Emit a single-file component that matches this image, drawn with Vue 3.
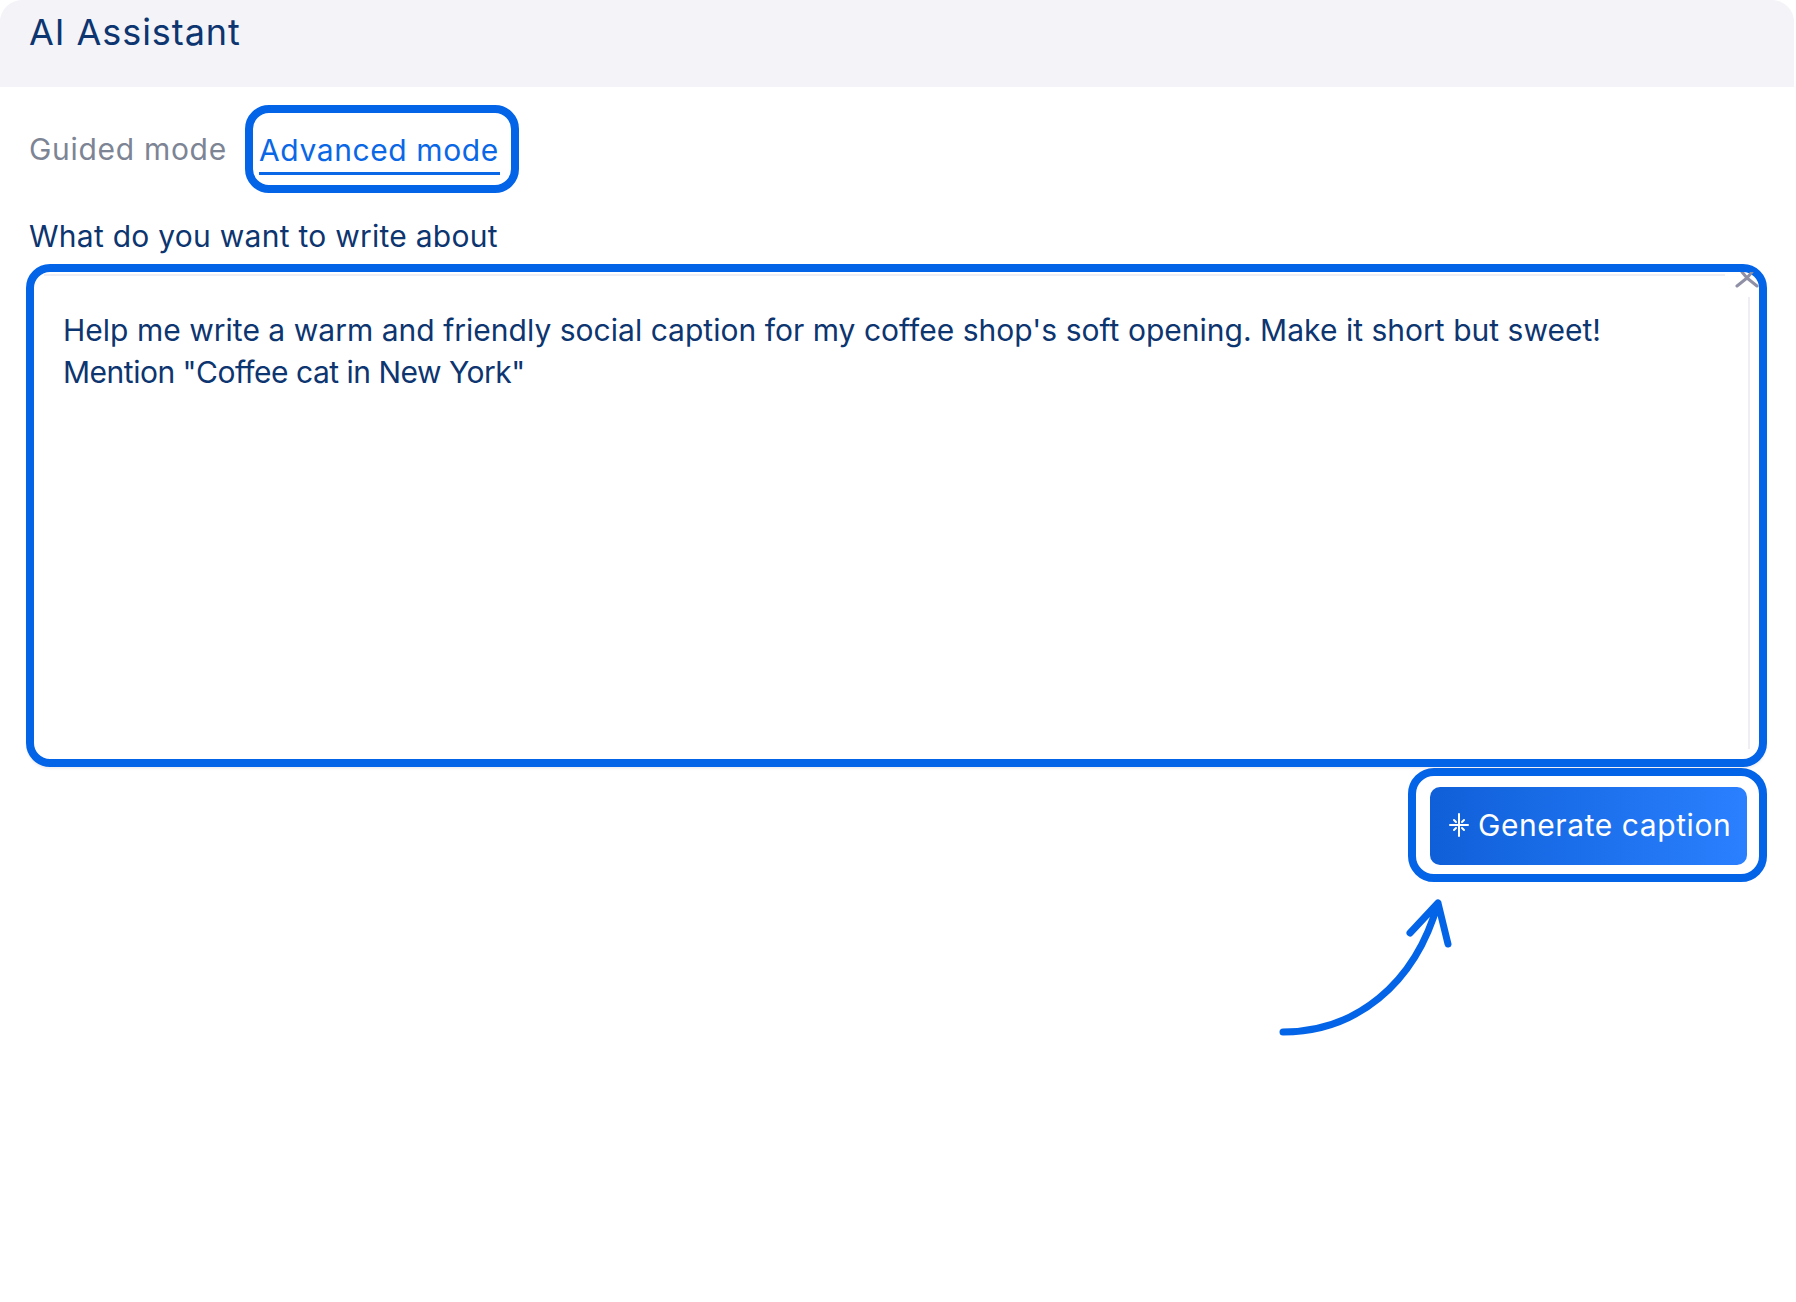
<script setup>
const tabs = [
  { label: 'Guided mode', active: false },
  { label: 'Advanced mode', active: true },
]
</script>

<template>
  <div class="page">
    <header class="head">AI Assistant</header>
    <main class="body">
      <nav class="tabs">
        <div v-for="t in tabs" :key="t.label" class="tab" :class="{ on: t.active }">
          <span class="tab-text">{{ t.label }}</span>
        </div>
      </nav>
      <label class="label">What do you want to write about</label>
      <div class="frame">
        <div class="input">
          <p class="line">Help me write a warm and friendly social caption for my coffee shop's soft opening. Make it short but sweet!</p>
          <p class="line second">Mention "Coffee cat in New York"</p>
        </div>
        <svg class="close" width="24" height="16" viewBox="0 0 24 16">
          <path d="M2 14 L12 6 L22 14 M7 0 L12 6 L17 0" fill="none" stroke="#8f8fa6" stroke-width="3" stroke-linecap="round" stroke-linejoin="round" />
        </svg>
      </div>
      <div class="actions">
        <div class="btn-frame">
          <button class="btn">
            <svg class="spark" width="22" height="24" viewBox="0 0 22 24">
              <path d="M11 1 V23 M2 12 H20 M6 7 L8 9 M16 7 L14 9 M6 17 L8 15 M16 17 L14 15" stroke="#fff" stroke-width="2" stroke-linecap="round" fill="none" />
            </svg>
            <span>Generate caption</span>
          </button>
        </div>
      </div>
      <div class="arrow-row">
        <svg width="180" height="150" viewBox="0 0 180 150">
          <path d="M8 137 C80 137 140 90 163 8 M135 38 L163 8 L173 49" fill="none" stroke="#0364e8" stroke-width="7" stroke-linecap="round" stroke-linejoin="round" />
        </svg>
      </div>
    </main>
  </div>
</template>

<style scoped>
* { box-sizing: border-box; }
.page {
  width: 1796px;
  height: 1302px;
  background: #fff;
  font-family: Inter, "Noto Sans", sans-serif;
  color: #0d3570;
  overflow: hidden;
}
.head {
  height: 87px;
  margin-right: 2px;
  background: #f3f3f8;
  border-radius: 22px 22px 0 0;
  padding: 10px 0 0 29px;
  font-size: 36px;
  line-height: 44px;
  letter-spacing: 0.95px;
}
.body {
  padding: 18px 29px 0 26px;
}
.tabs {
  display: flex;
  align-items: center;
}
.tab {
  font-size: 30px;
  line-height: 38px;
  color: #7d8595;
  letter-spacing: 0.7px;
  margin-left: 3px;
  width: 216px;
}
.tab.on {
  width: 274px;
  height: 88px;
  margin-left: 0;
  border: 8px solid #0364e8;
  border-radius: 24px;
  color: #0a67e6;
  letter-spacing: 0.6px;
  padding: 18px 0 0 6px;
}
.tab.on .tab-text {
  display: block;
  width: 241px;
  border-bottom: 3px solid #0a67e6;
  padding-bottom: 3px;
  white-space: nowrap;
}
.label {
  display: block;
  margin: 25px 0 10px 3px;
  font-size: 30px;
  line-height: 36px;
  letter-spacing: 0.26px;
}
.frame {
  position: relative;
  height: 503px;
  border: 8px solid #0364e8;
  border-radius: 24px;
  box-shadow: 0 2px 2px rgba(60, 70, 120, 0.08);
}
.frame::before {
  content: "";
  position: absolute;
  top: 2px;
  left: 10px;
  right: 34px;
  height: 2px;
  background: #eeeef3;
}
.frame::after {
  content: "";
  position: absolute;
  top: 25px;
  bottom: 10px;
  right: 9px;
  width: 2px;
  background: #eeeef3;
}
.input {
  padding: 37px 0 0 29px;
}
.line {
  margin: 0;
  font-size: 30px;
  line-height: 42px;
  white-space: nowrap;
  letter-spacing: 0.02px;
}
.second {
  letter-spacing: -0.5px;
}
.close {
  position: absolute;
  top: 0;
  right: 0;
}
.actions {
  display: flex;
  justify-content: flex-end;
  margin-top: 1px;
}
.btn-frame {
  width: 359px;
  height: 114px;
  border: 8px solid #0364e8;
  border-radius: 26px;
  padding: 11px 12px 9px 14px;
}
.btn {
  width: 100%;
  height: 100%;
  border: 0;
  border-radius: 10px;
  background: linear-gradient(90deg, #0f5fd8, #2a80ff);
  color: #fff;
  font: inherit;
  font-size: 30px;
  letter-spacing: 0.57px;
  display: flex;
  align-items: center;
  gap: 8px;
  padding: 0 0 2px 18px;
  white-space: nowrap;
}
.spark { flex: none; }
.arrow-row {
  display: flex;
  justify-content: flex-end;
  margin: 13px 312px 0 0;
}
</style>
